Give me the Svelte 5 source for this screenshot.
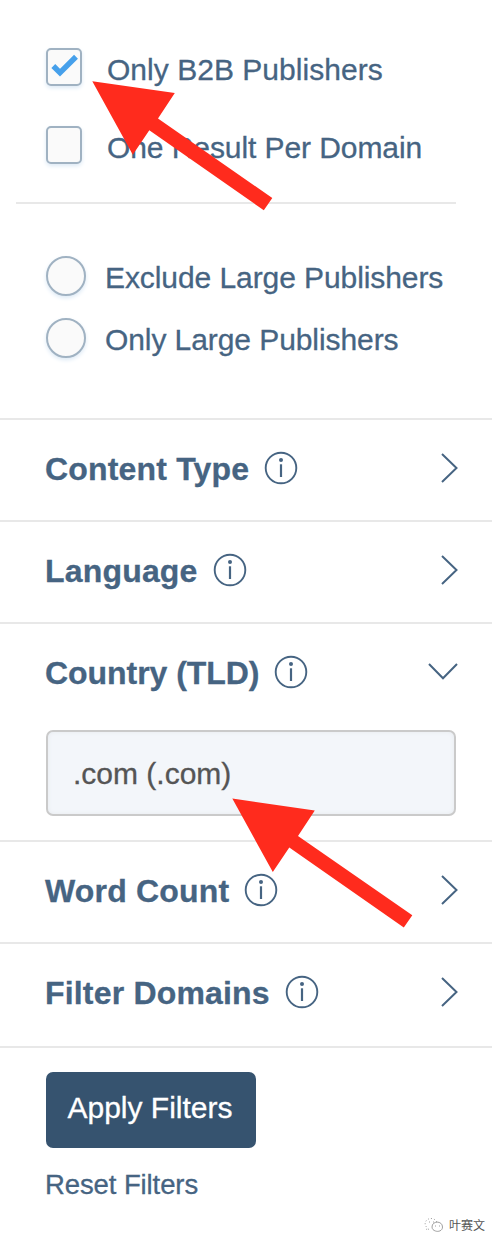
<script>
  let onlyB2b = true;
  let onePerDomain = false;
  let size = "";

  let sections = [
    { title: "Content Type", open: false },
    { title: "Language", open: false },
    { title: "Country (TLD)", open: true, value: ".com (.com)" },
    { title: "Word Count", open: false },
    { title: "Filter Domains", open: false, last: true }
  ];

  const sizes = [
    { id: "exclude", label: "Exclude Large Publishers" },
    { id: "only", label: "Only Large Publishers" }
  ];

  // both pointers share one shape
  const arrow = "M0 0L82.5 11.8L65.7 37.3L180 116.7L171.5 129L57 49L40.5 73.5Z";

  function toggle(section) {
    section.open = !section.open;
    sections = sections;
  }
</script>

<style>
  :global(body) {
    background: #fff;
  }

  .page {
    position: relative;
    width: 500px;
    height: 1246px;
    overflow: hidden;
    box-sizing: border-box;
    font-family: "Liberation Sans", Arial, sans-serif;
    font-size: 30px;
    line-height: 40px;
    color: #466482;
    white-space: nowrap;
    -webkit-text-stroke: 0.3px;
  }

  .panel {
    width: 492px;
  }

  .checks {
    margin: 0 36px 0 16px;
    padding: 48px 0 38px 30px;
    border-bottom: 2px solid #e8e8e8;
  }

  .sizes {
    padding: 52px 0 60px 46px;
  }

  label {
    display: flex;
    letter-spacing: -0.08px;
    cursor: pointer;
  }

  input {
    position: absolute;
    opacity: 0;
  }

  .check {
    height: 38px;
  }

  .check:first-child {
    letter-spacing: 0.03px;
  }

  .check + .check {
    margin-top: 40px;
  }

  .check span {
    margin: 2px 0 0 25px;
  }

  .radio {
    height: 40px;
  }

  .radio + .radio {
    margin-top: 22px;
  }

  .radio span {
    margin: 2px 0 0 19px;
  }

  .box,
  .dot {
    box-sizing: border-box;
    flex: none;
    border: 2px solid #a0b2c2;
    background: #fafafa;
    box-shadow: 0 2px 4px #dce9f5;
  }

  .box {
    width: 36px;
    height: 38px;
    border-radius: 5px;
  }

  .dot {
    width: 40px;
    height: 40px;
    border-radius: 50%;
  }

  :checked + .dot {
    background: #46a0eb;
  }

  svg {
    display: block;
    flex: none;
  }

  section {
    border-top: 2px solid #e8e8e8;
  }

  .head {
    display: flex;
    align-items: center;
    box-sizing: border-box;
    width: 100%;
    height: 100px;
    padding: 0 34px 4px 45px;
    border: 0;
    background: none;
    font: bold 32px/40px "Liberation Sans", Arial, sans-serif;
    letter-spacing: 0.18px;
    color: inherit;
    cursor: pointer;
  }

  .filled .head {
    letter-spacing: -0.05px;
  }

  .last .head {
    height: 102px;
    padding-bottom: 6px;
  }

  .title {
    position: relative;
    top: 1px;
  }

  .info {
    margin-left: 15px;
  }

  .chevron {
    margin-left: auto;
  }

  .value {
    display: flex;
    align-items: center;
    box-sizing: border-box;
    width: 410px;
    height: 86px;
    margin: 6px 0 24px 46px;
    padding: 2px 0 0 25px;
    border: 2px solid #cacaca;
    border-radius: 7px;
    background: #f3f6fa;
    box-shadow: inset 0 0 4px #e6eaee;
    color: #555;
  }

  .actions {
    display: flex;
    flex-direction: column;
    align-items: flex-start;
    padding: 24px 0 0 46px;
    border-top: 2px solid #e8e8e8;
  }

  .apply {
    width: 210px;
    height: 76px;
    padding: 0 2px 4px 0;
    border: 0;
    border-radius: 7px;
    background: #36536f;
    font: inherit;
    color: #fff;
  }

  .reset {
    margin: 17px 0 0 -1px;
    font-size: 27.5px;
    letter-spacing: -0.1px;
    color: inherit;
    text-decoration: none;
  }

  .arrows {
    position: absolute;
    top: 0;
    left: 0;
    pointer-events: none;
  }

  .mark {
    position: absolute;
    right: 15px;
    bottom: 11px;
    display: flex;
    align-items: center;
    gap: 5px;
    font: 12px/20px "Noto Sans CJK SC", sans-serif;
    -webkit-text-stroke: 0;
    color: #555;
  }
</style>

<div class="page">
  <div class="panel">
    <div class="checks">
      <label class="check">
        <input type="checkbox" bind:checked={onlyB2b} />
        <i class="box">
          {#if onlyB2b}
            <svg width="32" height="34" viewBox="0 0 32 34">
              <path d="M5.3 16L12 22.7L28 6.8" fill="none" stroke="#46a0eb" stroke-width="5.5" />
            </svg>
          {/if}
        </i>
        <span>Only B2B Publishers</span>
      </label>
      <label class="check">
        <input type="checkbox" bind:checked={onePerDomain} />
        <i class="box"></i>
        <span>One Result Per Domain</span>
      </label>
    </div>

    <div class="sizes">
      {#each sizes as item}
        <label class="radio">
          <input type="radio" bind:group={size} value={item.id} />
          <i class="dot"></i>
          <span>{item.label}</span>
        </label>
      {/each}
    </div>

    {#each sections as section}
      <section class:last={section.last} class:filled={section.value}>
        <button class="head" on:click={() => toggle(section)}>
          <span class="title">{section.title}</span>
          <svg class="info" width="34" height="34" viewBox="0 0 34 34">
            <circle cx="17" cy="17" r="15.3" fill="none" stroke="currentColor" stroke-width="1.9" />
            <circle cx="17" cy="8.9" r="2" fill="currentColor" />
            <path d="M17 13.3V26" stroke="currentColor" stroke-width="2.2" />
          </svg>
          <svg class="chevron" width="30" height="30" viewBox="0 0 30 30">
            <path
              d={section.open ? "M1 7L15 21.3L29 7" : "M14 1L28.5 15L14 29"}
              fill="none"
              stroke="currentColor"
              stroke-width="2" />
          </svg>
        </button>
        {#if section.open && section.value}
          <div class="value">{section.value}</div>
        {/if}
      </section>
    {/each}

    <div class="actions">
      <button class="apply">Apply Filters</button>
      <a class="reset" href="#reset">Reset Filters</a>
    </div>
  </div>

  <svg class="arrows" width="500" height="1246" viewBox="0 0 500 1246" fill="#ff2b1d">
    <path d={arrow} transform="translate(92.3 81.3)" />
    <path d={arrow} transform="translate(232.3 798.6)" />
  </svg>

  <div class="mark">
    <svg width="20" height="16" viewBox="0 0 20 16" fill="none" stroke="#888" stroke-width="0.8">
      <path d="M5 12L2.5 13L3 10.5C-1 7 2 1.5 7 1.5C10 1.5 12.5 3.5 13 5.5" stroke-dasharray="1 2" />
      <path d="M8 10C8 3.5 18.5 3.5 18.5 10C18.5 14 14 15 11.5 14C9.5 13.5 8 12 8 10Z" />
      <path d="M5 5H6M9 5H10M11 9H12M15 9H16" />
    </svg>
    <span>叶赛文</span>
  </div>
</div>
